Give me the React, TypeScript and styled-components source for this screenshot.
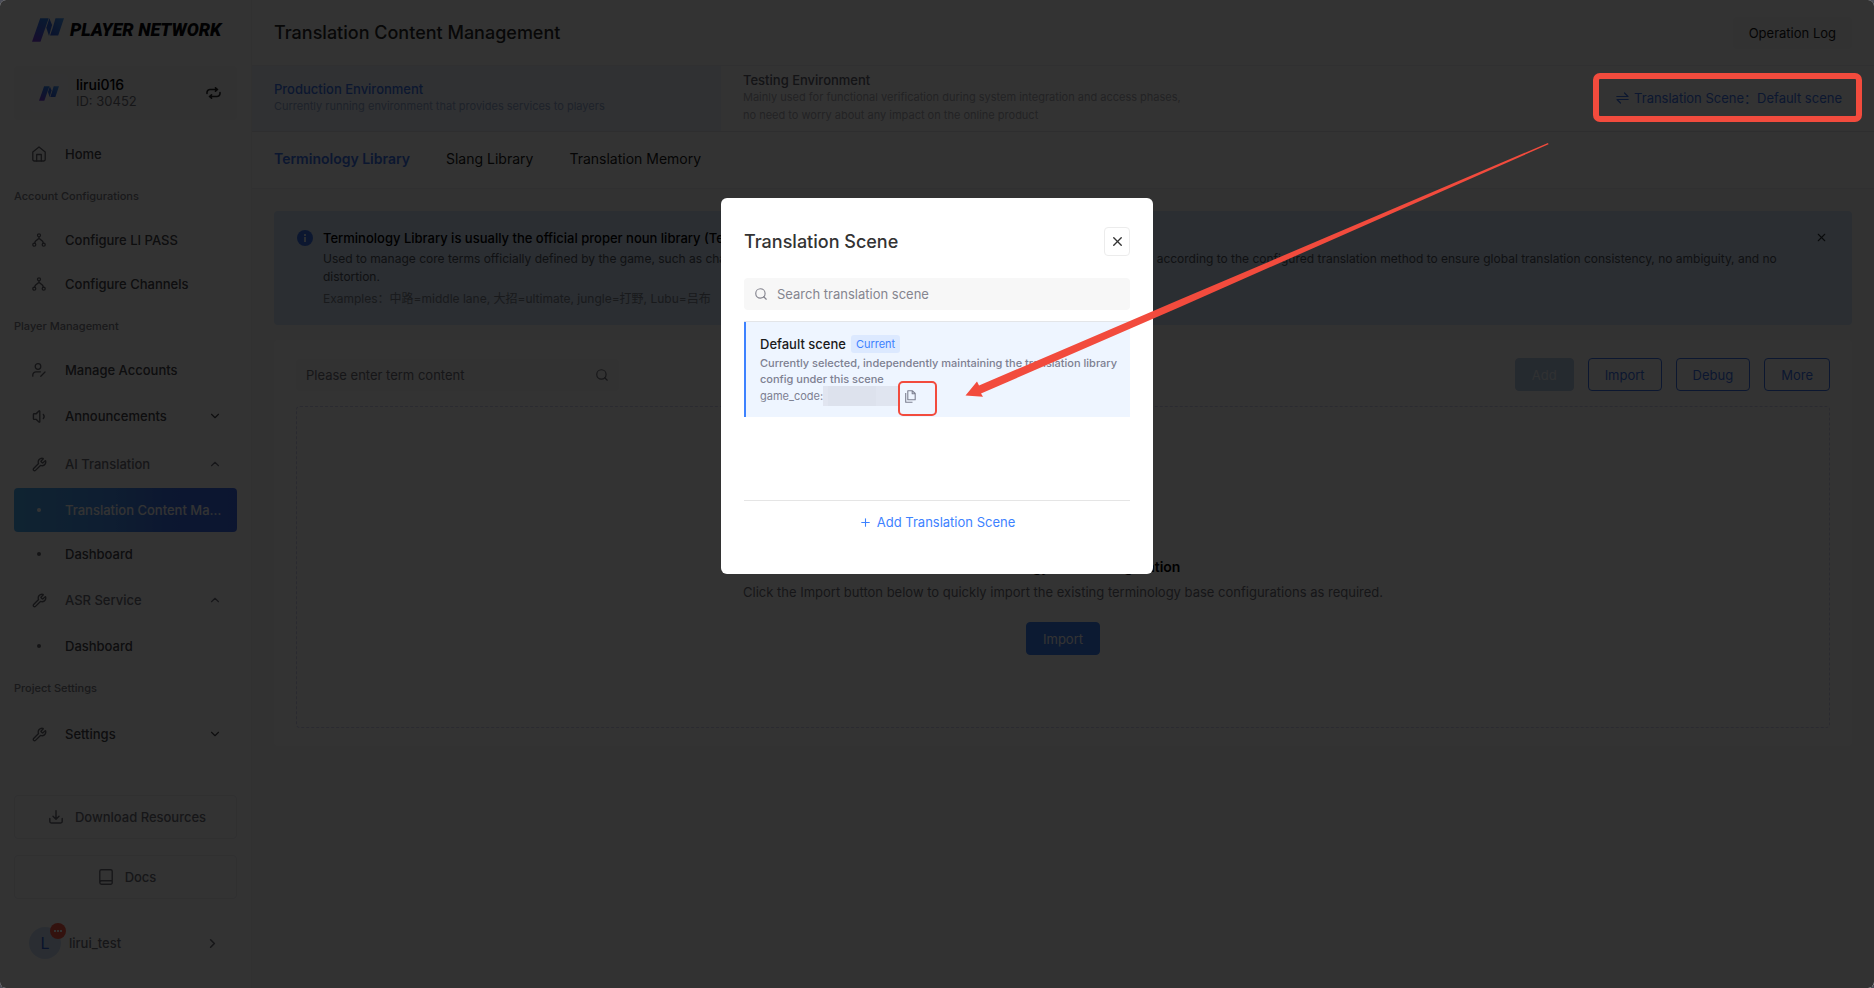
import React from 'react';
import styled, { createGlobalStyle, css } from 'styled-components';
import { ChevronDown, ChevronRight, ChevronUp, Plus, Search, Volume1, Wrench, X } from 'lucide-react';

const BLUE = '#3d82ff';
const RED = '#f24b3d';

const GlobalStyle = createGlobalStyle`
  *, *::before, *::after { box-sizing: border-box; }
  html, body, #root { height: 100%; }
  body {
    margin: 0;
    background: #4b4d57;
    color: #2b2b2b;
    font-family: Inter, "Noto Sans CJK SC", sans-serif;
    font-size: 13px;
    line-height: 20px;
  }
  button, input { font: inherit; color: inherit; }
  button { border: 0; padding: 0; background: none; cursor: pointer; }
  h1, h2, h3, p { margin: 0; }
  a { color: inherit; text-decoration: none; }
  svg { display: block; flex: none; }
`;

const Shell = styled.div`
  display: flex;
  min-height: 100%;
  background: #fff;
  border-radius: 6px;
  overflow: hidden;
`;

/* ---------- sidebar ---------- */

const Sidebar = styled.aside`
  display: flex;
  flex: none;
  flex-direction: column;
  width: 252px;
  padding: 17px 14px;
  border-right: 1px solid #f3f3f5;
`;

const Brand = styled.a`
  display: flex;
  align-items: center;
  gap: 6px;
  height: 25px;
  padding-left: 18px;
`;

const BrandName = styled.span`
  color: #08090c;
  font: italic 900 18px/24px Roboto, "Liberation Sans", sans-serif;
  white-space: nowrap;
`;

const Project = styled.div`
  display: flex;
  align-items: center;
  gap: 8px;
  height: 54px;
  margin: 24px 0 12px;
  padding: 0 16px;
  border-radius: 4px;
  background: #f7f7f8;
`;

const ProjectLogo = styled.span`
  display: grid;
  place-items: center;
  width: 38px;
  height: 38px;
  border-radius: 4px;
  background: #fbfbfc;
`;

const ProjectText = styled.div`
  flex: 1;
  line-height: 16px;
`;

const ProjectName = styled.div`
  color: #000;
  font-size: 14px;
  font-weight: 500;
`;

const ProjectId = styled.div`
  color: #70707a;
`;

const Nav = styled.nav`
  display: flex;
  flex-direction: column;
`;

const NavLabel = styled.div`
  height: 40px;
  margin-bottom: 2px;
  color: #7d7d86;
  font-size: 11px;
  font-weight: 500;
  line-height: 40px;
`;

const NavItem = styled.a<{ $group?: boolean; $active?: boolean; $open?: boolean }>`
  display: flex;
  align-items: center;
  gap: 19px;
  height: ${(p) => (p.$group ? 48 : 44)}px;
  padding: 0 15px 0 18px;
  border-radius: 4px;
  color: ${(p) => (p.$open ? '#70707a' : '#45454b')};
  font-weight: 500;
  ${(p) =>
    p.$active &&
    css`
      background: linear-gradient(90deg, #4eb0f5 0%, #4590f2 45%, #3d72ee 70%, #3f6cf0 100%);
      color: #fff;
    `}
`;

const NavIcon = styled.span`
  display: grid;
  place-items: center;
  width: 14px;
  color: #66666e;
`;

const NavText = styled.span`
  flex: 1;
  overflow: hidden;
  text-overflow: ellipsis;
  white-space: nowrap;
`;

const Dot = styled.span<{ $light?: boolean }>`
  width: 4px;
  height: 4px;
  border-radius: 50%;
  background: ${(p) => (p.$light ? '#fff' : '#66666e')};
`;

const SidebarFooter = styled.div`
  display: flex;
  flex-direction: column;
  gap: 16px;
  margin-top: auto;
  color: #70707a;
  font-weight: 500;
`;

const FooterButton = styled.button`
  display: flex;
  align-items: center;
  justify-content: center;
  gap: 12px;
  height: 44px;
  padding-left: 4px;
  border: 1px solid #ededf0;
  border-radius: 4px;
`;

const UserRow = styled.button`
  display: flex;
  align-items: center;
  gap: 8px;
  height: 56px;
  padding: 0 17px 0 15px;
  text-align: left;
`;

const UserName = styled.span`
  flex: 1;
`;

const Avatar = styled.span`
  position: relative;
  width: 32px;
  height: 32px;
  border-radius: 50%;
  background: #d2e2fa;
  color: #2f62d8;
  font-size: 16px;
  font-weight: 400;
  line-height: 32px;
  text-align: center;
`;

const AvatarBadge = styled.span`
  position: absolute;
  top: -4px;
  right: -5px;
  display: flex;
  align-items: center;
  justify-content: center;
  gap: 1px;
  width: 16px;
  height: 16px;
  border-radius: 50%;
  background: #ff5a45;
  i { width: 2px; height: 2px; background: #fff; }
`;

/* ---------- main column ---------- */

const Main = styled.main`
  display: flex;
  flex: 1;
  flex-direction: column;
  min-width: 0;
`;

const Header = styled.header`
  display: flex;
  align-items: center;
  justify-content: space-between;
  height: 66px;
  padding: 0 22px;
  border-bottom: 1px solid #f1f1f3;
`;

const PageTitle = styled.h1`
  color: #2b2b2b;
  font-size: 18px;
  font-weight: 500;
  line-height: 24px;
`;

const LogButton = styled.button`
  height: 32px;
  padding: 0 16px;
  border-radius: 4px;
  background: #f7f7f8;
  color: #1a1a1a;
`;

const EnvBar = styled.div`
  display: flex;
  height: 66px;
  border-bottom: 1px solid #e4e4e8;
`;

const Env = styled.button<{ $active?: boolean }>`
  display: flex;
  flex: none;
  flex-direction: column;
  justify-content: center;
  width: 469px;
  padding: 0 0 2px 22px;
  background: ${(p) => (p.$active ? '#eef4fd' : 'none')};
  text-align: left;
  white-space: nowrap;
`;

const EnvName = styled.span<{ $active?: boolean }>`
  color: ${(p) => (p.$active ? '#3d74ee' : '#63636e')};
  font-weight: 500;
  line-height: 16px;
`;

const EnvNote = styled.span<{ $active?: boolean }>`
  color: ${(p) => (p.$active ? '#94a9d2' : '#acacb3')};
  font-size: 11px;
  line-height: 18px;
`;

const SceneButton = styled.button`
  display: flex;
  align-items: center;
  gap: 5px;
  margin: 0 32px 0 auto;
  padding-bottom: 2px;
  color: #3d74ee;
`;

const Tabs = styled.div`
  display: flex;
  align-items: center;
  gap: 36px;
  height: 57px;
  padding: 0 22px 2px;
  border-bottom: 1px solid #f1f1f3;
`;

const Tab = styled.button<{ $active?: boolean }>`
  color: ${(p) => (p.$active ? '#3d74ee' : '#1a1a1a')};
  font-size: 14px;
  font-weight: ${(p) => (p.$active ? 600 : 400)};
`;

const Content = styled.div`
  display: flex;
  flex: 1;
  flex-direction: column;
  gap: 15px;
  padding: 22px;
  background: #f9f9fa;
`;

const Banner = styled.section`
  display: flex;
  align-items: flex-start;
  gap: 10px;
  padding: 17px 24px 13px 23px;
  border-radius: 4px;
  background: #d5e4f8;
`;

const BannerBody = styled.div`
  flex: 1;
  padding-right: 10px;
`;

const BannerTitle = styled.h2`
  padding-bottom: 2px;
  color: #000;
  font-size: 13px;
  font-weight: 500;
  line-height: 20px;
`;

const BannerText = styled.p<{ $muted?: boolean }>`
  padding-bottom: 4px;
  color: ${(p) => (p.$muted ? '#7c838e' : '#50565f')};
  font-size: 12px;
  line-height: 18px;
`;

const InfoIcon = styled.span`
  display: grid;
  flex: none;
  place-items: center;
  width: 16px;
  height: 16px;
  margin-top: 2px;
  border-radius: 50%;
  background: #3d74ee;
`;

const BannerClose = styled.button`
  padding-top: 3px;
  color: #30343a;
`;

const Card = styled.section`
  display: flex;
  flex-direction: column;
  gap: 15px;
  padding: 18px 22px;
  border-radius: 4px;
  background: #fff;
`;

const Toolbar = styled.div`
  display: flex;
  align-items: center;
  gap: 14px;
`;

const TermSearch = styled.label`
  display: flex;
  align-items: center;
  width: 323px;
  height: 32px;
  margin-right: auto;
  padding: 0 10px;
  border-radius: 4px;
  background: #f7f7f8;
  color: #70707a;
`;

const BareInput = styled.input`
  flex: 1;
  min-width: 0;
  padding: 0;
  border: 0;
  outline: 0;
  background: none;
  &::placeholder { color: inherit; opacity: 1; }
`;

const Action = styled.button<{ $kind: 'disabled' | 'outline' | 'solid' }>`
  height: 33px;
  padding: 0 16px;
  border: 1px solid ${(p) => (p.$kind === 'disabled' ? '#b8cfe8' : '#3d74ee')};
  border-radius: 4px;
  ${(p) => p.$kind === 'disabled' && css`background: #b8cfe8; color: #f0f4fb;`}
  ${(p) => p.$kind === 'outline' && css`color: #3d74ee;`}
  ${(p) => p.$kind === 'solid' && css`background: #3d82f8; border-color: #3d82f8; color: #fff;`}
`;

const Empty = styled.div`
  display: flex;
  flex-direction: column;
  align-items: center;
  justify-content: flex-end;
  height: 322px;
  padding-bottom: 72px;
  border: 1px dashed #d2d2ee;
  border-radius: 4px;
`;

const EmptyTitle = styled.h3`
  color: #000;
  font-size: 14px;
  font-weight: 600;
  line-height: 24px;
`;

const EmptyText = styled.p`
  padding: 3px 0 20px;
  color: #70707a;
  line-height: 20px;
`;

/* ---------- dialog ---------- */

const Backdrop = styled.div`
  position: fixed;
  inset: 0;
  display: flex;
  align-items: flex-start;
  justify-content: center;
  padding-top: 198px;
  border-radius: 6px;
  background: rgba(0, 0, 0, 0.8);
`;

const Dialog = styled.div`
  display: flex;
  flex-direction: column;
  width: 432px;
  height: 376px;
  padding: 29px 23px 42px;
  border-radius: 6px;
  background: #fff;
`;

const DialogHead = styled.div`
  display: flex;
  align-items: center;
  justify-content: space-between;
  margin-bottom: 22px;
`;

const DialogTitle = styled.h2`
  color: #333;
  font-size: 18px;
  font-weight: 500;
  line-height: 24px;
`;

const DialogClose = styled.button`
  display: grid;
  place-items: center;
  width: 26px;
  height: 29px;
  border: 1px solid #ececec;
  border-radius: 4px;
  color: #333;
`;

const SceneSearch = styled.label`
  display: flex;
  align-items: center;
  gap: 9px;
  height: 32px;
  margin-bottom: 11px;
  padding: 0 10px;
  border-radius: 4px;
  background: #f7f7f7;
  color: #85858f;
`;

const SceneList = styled.div`
  flex: 1;
  border-top: 1px solid #e3e5e8;
  border-bottom: 1px solid #e5e5e5;
`;

const Scene = styled.div`
  height: 95px;
  padding: 13px 8px 13px 14px;
  border-left: 2px solid ${BLUE};
  background: #eef5ff;
  color: #7d8091;
  font-size: 11px;
  line-height: 16px;
`;

const SceneHead = styled.div`
  display: flex;
  align-items: center;
  gap: 5px;
  height: 18px;
  margin-bottom: 2px;
`;

const SceneName = styled.span`
  color: #1a1a1a;
  font-size: 13px;
  font-weight: 500;
`;

const Tag = styled.span`
  padding: 0 5px;
  border-radius: 3px;
  background: #dce9ff;
  color: ${BLUE};
  line-height: 18px;
`;

const SceneNote = styled.p`
  font-weight: 500;
`;

const CodeRow = styled.div`
  display: flex;
  align-items: center;
  height: 18px;
`;

const Mosaic = styled.span`
  width: 76px;
  height: 20px;
  background: linear-gradient(90deg, #e1e5f0 0 5px, #dde2ed 5px 53px, #e0e5f0 53px);
`;

const CopyButton = styled.button`
  position: relative;
  margin-left: 6px;
  color: #7d8091;
`;

const CopyMark = styled.span`
  position: absolute;
  top: -9px;
  left: -7px;
  width: 39px;
  height: 35px;
  border: 2px solid ${RED};
  border-radius: 5px;
`;

const AddScene = styled.button`
  display: flex;
  align-items: center;
  justify-content: center;
  gap: 5px;
  height: 31px;
  padding-top: 11px;
  color: ${BLUE};
`;

/* ---------- annotations over the whole window ---------- */

const Marks = styled.div`
  position: fixed;
  inset: 0;
  pointer-events: none;
`;

const SceneMark = styled.div`
  position: absolute;
  top: 73px;
  right: 12px;
  width: 269px;
  height: 49px;
  border: 6px solid ${RED};
  border-radius: 7px;
`;

const Arrow = styled.svg`
  position: absolute;
  top: 143px;
  left: calc(50% + 28px);
`;

function LogoMark({ width }: { width: number }) {
  return (
    <svg width={width} height={(width * 24) / 32} viewBox="0 0 94 69" aria-hidden="true">
      <defs>
        <linearGradient id="slab" x1="0.6" y1="0" x2="0.3" y2="1">
          <stop offset="0" stopColor="#2f7fee" />
          <stop offset="0.55" stopColor="#4b62ea" />
          <stop offset="1" stopColor="#7a3fe0" />
        </linearGradient>
        <linearGradient id="wing" x1="1" y1="0" x2="0" y2="1">
          <stop offset="0" stopColor="#4a9ff8" />
          <stop offset="1" stopColor="#2f5ae0" />
        </linearGradient>
      </defs>
      <path d="M24 0H49L25 69H0Z" fill="url(#slab)" />
      <path d="M51 0L59 20L50 52L42 28Z" fill="#356ce6" />
      <path d="M69 0H94L77 51H53L61 28Z" fill="url(#wing)" />
    </svg>
  );
}

const stroke = {
  fill: 'none',
  stroke: 'currentColor',
  strokeWidth: 1.3,
  strokeLinecap: 'round' as const,
  strokeLinejoin: 'round' as const,
};

const HomeIcon = () => (
  <svg width="14" height="16" viewBox="0 0 14 16" {...stroke}>
    <path d="M.8 6L7 .9 13.2 6v7.600a1.400 1.400 0 0 1-1.400 1.400H2.200A1.400 1.400 0 0 1 .8 13.600Z" />
    <path d="M4.700 15V8.500h4.600V15" />
  </svg>
);

const BranchIcon = () => (
  <svg width="14" height="14" viewBox="0 0 14 14" {...stroke}>
    <circle cx="7" cy="2.300" r="1.500" />
    <circle cx="2.300" cy="11.700" r="1.500" />
    <circle cx="11.700" cy="11.700" r="1.500" />
    <path d="M7 3.800V5.500M2.600 10.200C2.800 8 4 7.500 7 5.500C10 7.500 11.200 8 11.400 10.200" />
  </svg>
);

const AccountIcon = () => (
  <svg width="14" height="14" viewBox="0 0 14 14" {...stroke}>
    <circle cx="6" cy="3.500" r="2.800" />
    <path d="M.8 13.200V12A3.200 3.200 0 0 1 4 8.800H8.500M8.800 13.200L13 9" />
  </svg>
);

const DownloadIcon = () => (
  <svg width="14" height="14" viewBox="0 0 14 14" {...stroke} strokeWidth={1.5}>
    <path d="M7 .8V9M4 6.200L7 9.200L10 6.200M.8 8.500V11.500A1.400 1.400 0 0 0 2.200 12.900H11.800A1.400 1.400 0 0 0 13.200 11.500V8.500" />
  </svg>
);

const BookIcon = () => (
  <svg width="14" height="16" viewBox="0 0 14 16" {...stroke} strokeWidth={1.4}>
    <path d="M.8 13.500V2.200A1.400 1.400 0 0 1 2.200 .8H11.800A1.400 1.400 0 0 1 13.200 2.200V13.800A1.400 1.400 0 0 1 11.800 15.200H2.500A1.700 1.700 0 0 1 2.500 11.800H13.200" />
  </svg>
);

const LoopIcon = () => (
  <svg width="15" height="12" viewBox="0 0 15 12" {...stroke} strokeWidth={1.6}>
    <path d="M1 6.500V5.500A3 3 0 0 1 4 2.500H11.500M9.500 .8L11.500 2.500L9.500 4.200M14 5.500V6.500A3 3 0 0 1 11 9.500H3.500M5.500 7.800L3.500 9.500L5.500 11.200" />
  </svg>
);

const SwapIcon = () => (
  <svg width="13" height="12" viewBox="0 0 13 12" {...stroke} strokeWidth={1.2}>
    <path d="M.8 4.500H12L8.500 1M12.200 7.500H1L4.500 11" />
  </svg>
);

const CopyIcon = () => (
  <svg width="11" height="13" viewBox="0 0 11 13" {...stroke} strokeWidth={1.1} strokeLinecap="butt">
    <path d="M2.800 .8H7.500L10.200 3.500V9.800H2.800ZM7.200 .8V3.800H10.200M.7 3V12.200H7.500" />
  </svg>
);

type NavEntry = {
  label: string;
  icon?: React.ReactNode;
  section?: boolean;
  arrow?: 'up' | 'down';
  active?: boolean;
};

const wrench = <Wrench size={15} strokeWidth={2.2} />;

const NAV: NavEntry[] = [
  { label: 'Home', icon: <HomeIcon /> },
  { label: 'Account Configurations', section: true },
  { label: 'Configure LI PASS', icon: <BranchIcon /> },
  { label: 'Configure Channels', icon: <BranchIcon /> },
  { label: 'Player Management', section: true },
  { label: 'Manage Accounts', icon: <AccountIcon /> },
  { label: 'Announcements', icon: <Volume1 size={17} strokeWidth={2} />, arrow: 'down' },
  { label: 'AI Translation', icon: wrench, arrow: 'up' },
  { label: 'Translation Content Management', active: true },
  { label: 'Dashboard' },
  { label: 'ASR Service', icon: wrench, arrow: 'up' },
  { label: 'Dashboard' },
  { label: 'Project Settings', section: true },
  { label: 'Settings', icon: wrench, arrow: 'down' },
];

function SidebarNav() {
  return (
    <Nav>
      {NAV.map((n, i) =>
        n.section ? (
          <NavLabel key={i}>{n.label}</NavLabel>
        ) : (
          <NavItem key={i} href="#" $group={!!n.arrow} $active={n.active} $open={n.arrow === 'up'}>
            <NavIcon>{n.icon ?? <Dot $light={n.active} />}</NavIcon>
            <NavText>{n.label}</NavText>
            {n.arrow === 'down' && <ChevronDown size={14} strokeWidth={2} />}
            {n.arrow === 'up' && <ChevronUp size={14} strokeWidth={2} />}
          </NavItem>
        ),
      )}
    </Nav>
  );
}

export default function App() {
  return (
    <>
      <GlobalStyle />
      <Shell>
        <Sidebar>
          <Brand href="#">
            <LogoMark width={32} />
            <BrandName>PLAYER NETWORK</BrandName>
          </Brand>
          <Project>
            <ProjectLogo>
              <LogoMark width={20} />
            </ProjectLogo>
            <ProjectText>
              <ProjectName>lirui016</ProjectName>
              <ProjectId>ID: 30452</ProjectId>
            </ProjectText>
            <button aria-label="Switch project">
              <LoopIcon />
            </button>
          </Project>
          <SidebarNav />
          <SidebarFooter>
            <FooterButton>
              <DownloadIcon />
              Download Resources
            </FooterButton>
            <FooterButton>
              <BookIcon />
              Docs
            </FooterButton>
            <UserRow>
              <Avatar>
                L
                <AvatarBadge>
                  <i />
                  <i />
                  <i />
                </AvatarBadge>
              </Avatar>
              <UserName>lirui_test</UserName>
              <ChevronRight size={15} strokeWidth={2.6} />
            </UserRow>
          </SidebarFooter>
        </Sidebar>

        <Main>
          <Header>
            <PageTitle>Translation Content Management</PageTitle>
            <LogButton>Operation Log</LogButton>
          </Header>
          <EnvBar>
            <Env $active>
              <EnvName $active>Production Environment</EnvName>
              <EnvNote $active>Currently running environment that provides services to players</EnvNote>
            </Env>
            <Env>
              <EnvName>Testing Environment</EnvName>
              <EnvNote>
                Mainly used for functional verification during system integration and access phases,
                <br />
                no need to worry about any impact on the online product
              </EnvNote>
            </Env>
            <SceneButton>
              <SwapIcon />
              Translation Scene：Default scene
            </SceneButton>
          </EnvBar>
          <Tabs>
            <Tab $active>Terminology Library</Tab>
            <Tab>Slang Library</Tab>
            <Tab>Translation Memory</Tab>
          </Tabs>
          <Content>
            <Banner>
              <InfoIcon>
                <svg width="4" height="8" viewBox="0 0 4 8" fill="#d5e4f8">
                  <path d="M1 0H3V2H1ZM1 3H3V8H1Z" />
                </svg>
              </InfoIcon>
              <BannerBody>
                <BannerTitle>
                  Terminology Library is usually the official proper noun library (Terms with fixed translations)
                </BannerTitle>
                <BannerText>
                  Used to manage core terms officially defined by the game, such as character names, skills, items,
                  and maps. Matching terms are translated strictly according to the configured translation method to
                  ensure global translation consistency, no ambiguity, and no distortion.
                </BannerText>
                <BannerText $muted>
                  Examples：中路=middle lane, 大招=ultimate, jungle=打野, Lubu=吕布
                </BannerText>
              </BannerBody>
              <BannerClose aria-label="Dismiss">
                <X size={13} strokeWidth={2} />
              </BannerClose>
            </Banner>
            <Card>
              <Toolbar>
                <TermSearch>
                  <BareInput aria-label="Term content" placeholder="Please enter term content" />
                  <Search size={14} strokeWidth={2} />
                </TermSearch>
                <Action $kind="disabled">Add</Action>
                <Action $kind="outline">Import</Action>
                <Action $kind="outline">Debug</Action>
                <Action $kind="outline">More</Action>
              </Toolbar>
              <Empty>
                <EmptyTitle>No terminology base configuration</EmptyTitle>
                <EmptyText>
                  Click the Import button below to quickly import the existing terminology base configurations as
                  required.
                </EmptyText>
                <Action $kind="solid">Import</Action>
              </Empty>
            </Card>
          </Content>
        </Main>
      </Shell>

      <Backdrop>
        <Dialog role="dialog" aria-modal="true" aria-labelledby="scene-title">
          <DialogHead>
            <DialogTitle id="scene-title">Translation Scene</DialogTitle>
            <DialogClose aria-label="Close">
              <X size={15} strokeWidth={2.2} />
            </DialogClose>
          </DialogHead>
          <SceneSearch>
            <Search size={14} strokeWidth={2} />
            <BareInput aria-label="Search translation scene" placeholder="Search translation scene" />
          </SceneSearch>
          <SceneList>
            <Scene>
              <SceneHead>
                <SceneName>Default scene</SceneName>
                <Tag>Current</Tag>
              </SceneHead>
              <SceneNote>
                Currently selected, independently maintaining the translation library config under this scene
              </SceneNote>
              <CodeRow>
                game_code:
                <Mosaic />
                <CopyButton aria-label="Copy game code">
                  <CopyIcon />
                  <CopyMark />
                </CopyButton>
              </CodeRow>
            </Scene>
          </SceneList>
          <AddScene>
            <Plus size={13} strokeWidth={2} />
            Add Translation Scene
          </AddScene>
        </Dialog>
      </Backdrop>

      <Marks aria-hidden="true">
        <SceneMark />
        <Arrow width="584" height="256" viewBox="0 0 584 256" fill={RED}>
          <path d="M0.500 252.500L12 238.500L14 242.500L215 156.500L583 0L583.500 1.200L215 164L16 250.500L18 253.700Z" />
        </Arrow>
      </Marks>
    </>
  );
}
